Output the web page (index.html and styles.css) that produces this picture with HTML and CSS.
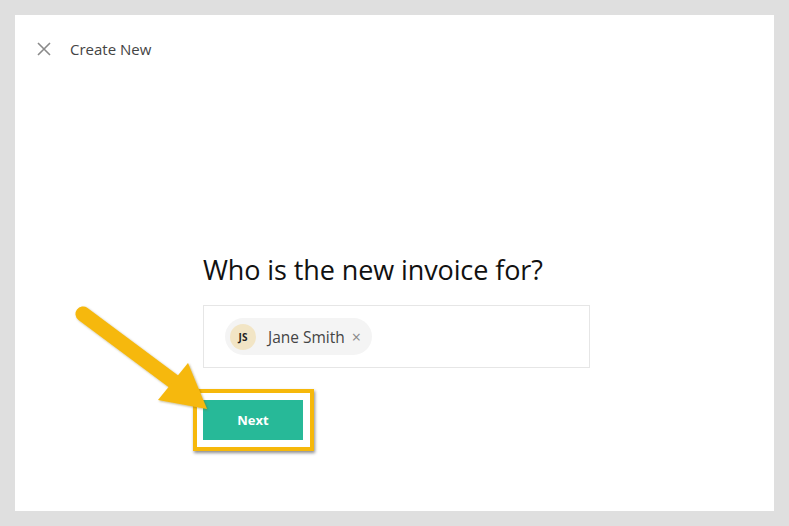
FILE: index.html
```html
<!DOCTYPE html>
<html>
<head>
    <title>Create New</title>
    <link rel="stylesheet" href="styles.css">
</head>
<body>
<div class="panel">
    <div class="topbar">
        <svg class="close" width="14" height="14" viewBox="0 0 14 14">
            <path d="M1 1 L13 13 M13 1 L1 13" stroke="#8a8a8a" stroke-width="1.6" fill="none"/>
        </svg>
        <span class="title">Create New</span>
    </div>

    <div class="content">
        <h1 class="question">Who is the new invoice for?</h1>
        <div class="picker">
            <div class="chip">
                <span class="avatar">JS</span>
                <span class="chip-name">Jane Smith</span>
                <span class="chip-remove">&times;</span>
            </div>
        </div>
        <div class="highlight">
            <button class="next">Next</button>
        </div>
    </div>

    <!-- annotation arrow -->
    <svg class="arrow" width="200" height="130" viewBox="0 0 200 130">
        <g filter="url(#shade)">
            <line x1="68" y1="299" x2="162" y2="369" transform="translate(0,-280)" stroke="#f6b80b" stroke-width="15" stroke-linecap="round"/>
            <polygon points="143,385 173,348 192,394" transform="translate(0,-280)" fill="#f6b80b"/>
        </g>
        <defs>
            <filter id="shade" x="-10%" y="-10%" width="130%" height="130%">
                <feDropShadow dx="1" dy="1" stdDeviation="1" flood-color="#6b5300" flood-opacity="0.45"/>
            </filter>
        </defs>
    </svg>
</div>
</body>
</html>
```

FILE: styles.css
```css
body {
    margin: 0;
    padding: 15px;
    background-color: #dfdfdf;
    font-family: "Open Sans", "Noto Sans", sans-serif;
}

.panel {
    position: relative;
    width: 759px;
    height: 496px;
    background-color: #fff;
    box-sizing: border-box;
}

.topbar {
    display: flex;
    align-items: center;
    padding: 27px 0 0 22px;
    height: 14px;
}

.close {
    display: block;
}

.title {
    margin-left: 19px;
    font-size: 15px;
    color: #444;
}

.content {
    display: flex;
    flex-direction: column;
    margin: 196px 0 0 188px;
    width: 387px;
}

.question {
    margin: 0;
    font-size: 27px;
    font-weight: 400;
    color: #111;
    line-height: 36px;
    letter-spacing: -0.1px;
}

.picker {
    margin-top: 17px;
    height: 63px;
    border: 1px solid #e6e6e6;
    box-sizing: border-box;
    padding: 12px 0 0 21px;
    display: flex;
    align-items: flex-start;
}

.chip {
    display: flex;
    align-items: center;
    height: 37px;
    padding: 0 11px 0 5px;
    background-color: #f4f4f4;
    border-radius: 19px;
}

.avatar {
    width: 26px;
    height: 26px;
    border-radius: 50%;
    background-color: #f2e5c5;
    color: #222;
    font-size: 10px;
    font-weight: 700;
    display: flex;
    align-items: center;
    justify-content: center;
}

.chip-name {
    margin-left: 12px;
    font-size: 15.5px;
    color: #444;
}

.chip-remove {
    margin-left: 7px;
    font-size: 16px;
    color: #888;
}

.highlight {
    align-self: flex-start;
    margin: 21px 0 0 -10px;
    border: 4px solid #f6b80b;
    padding: 7px 7px 7px 6px;
    background-color: #fff;
    box-shadow: 1px 2px 3px rgba(0, 0, 0, 0.45);
}

.next {
    display: block;
    width: 100px;
    height: 40px;
    border: none;
    background-color: #27b998;
    color: #fff;
    font-family: "Open Sans", sans-serif;
    font-size: 13px;
    font-weight: 700;
}

.arrow {
    position: absolute;
    left: 0;
    top: 280px;
}
```
